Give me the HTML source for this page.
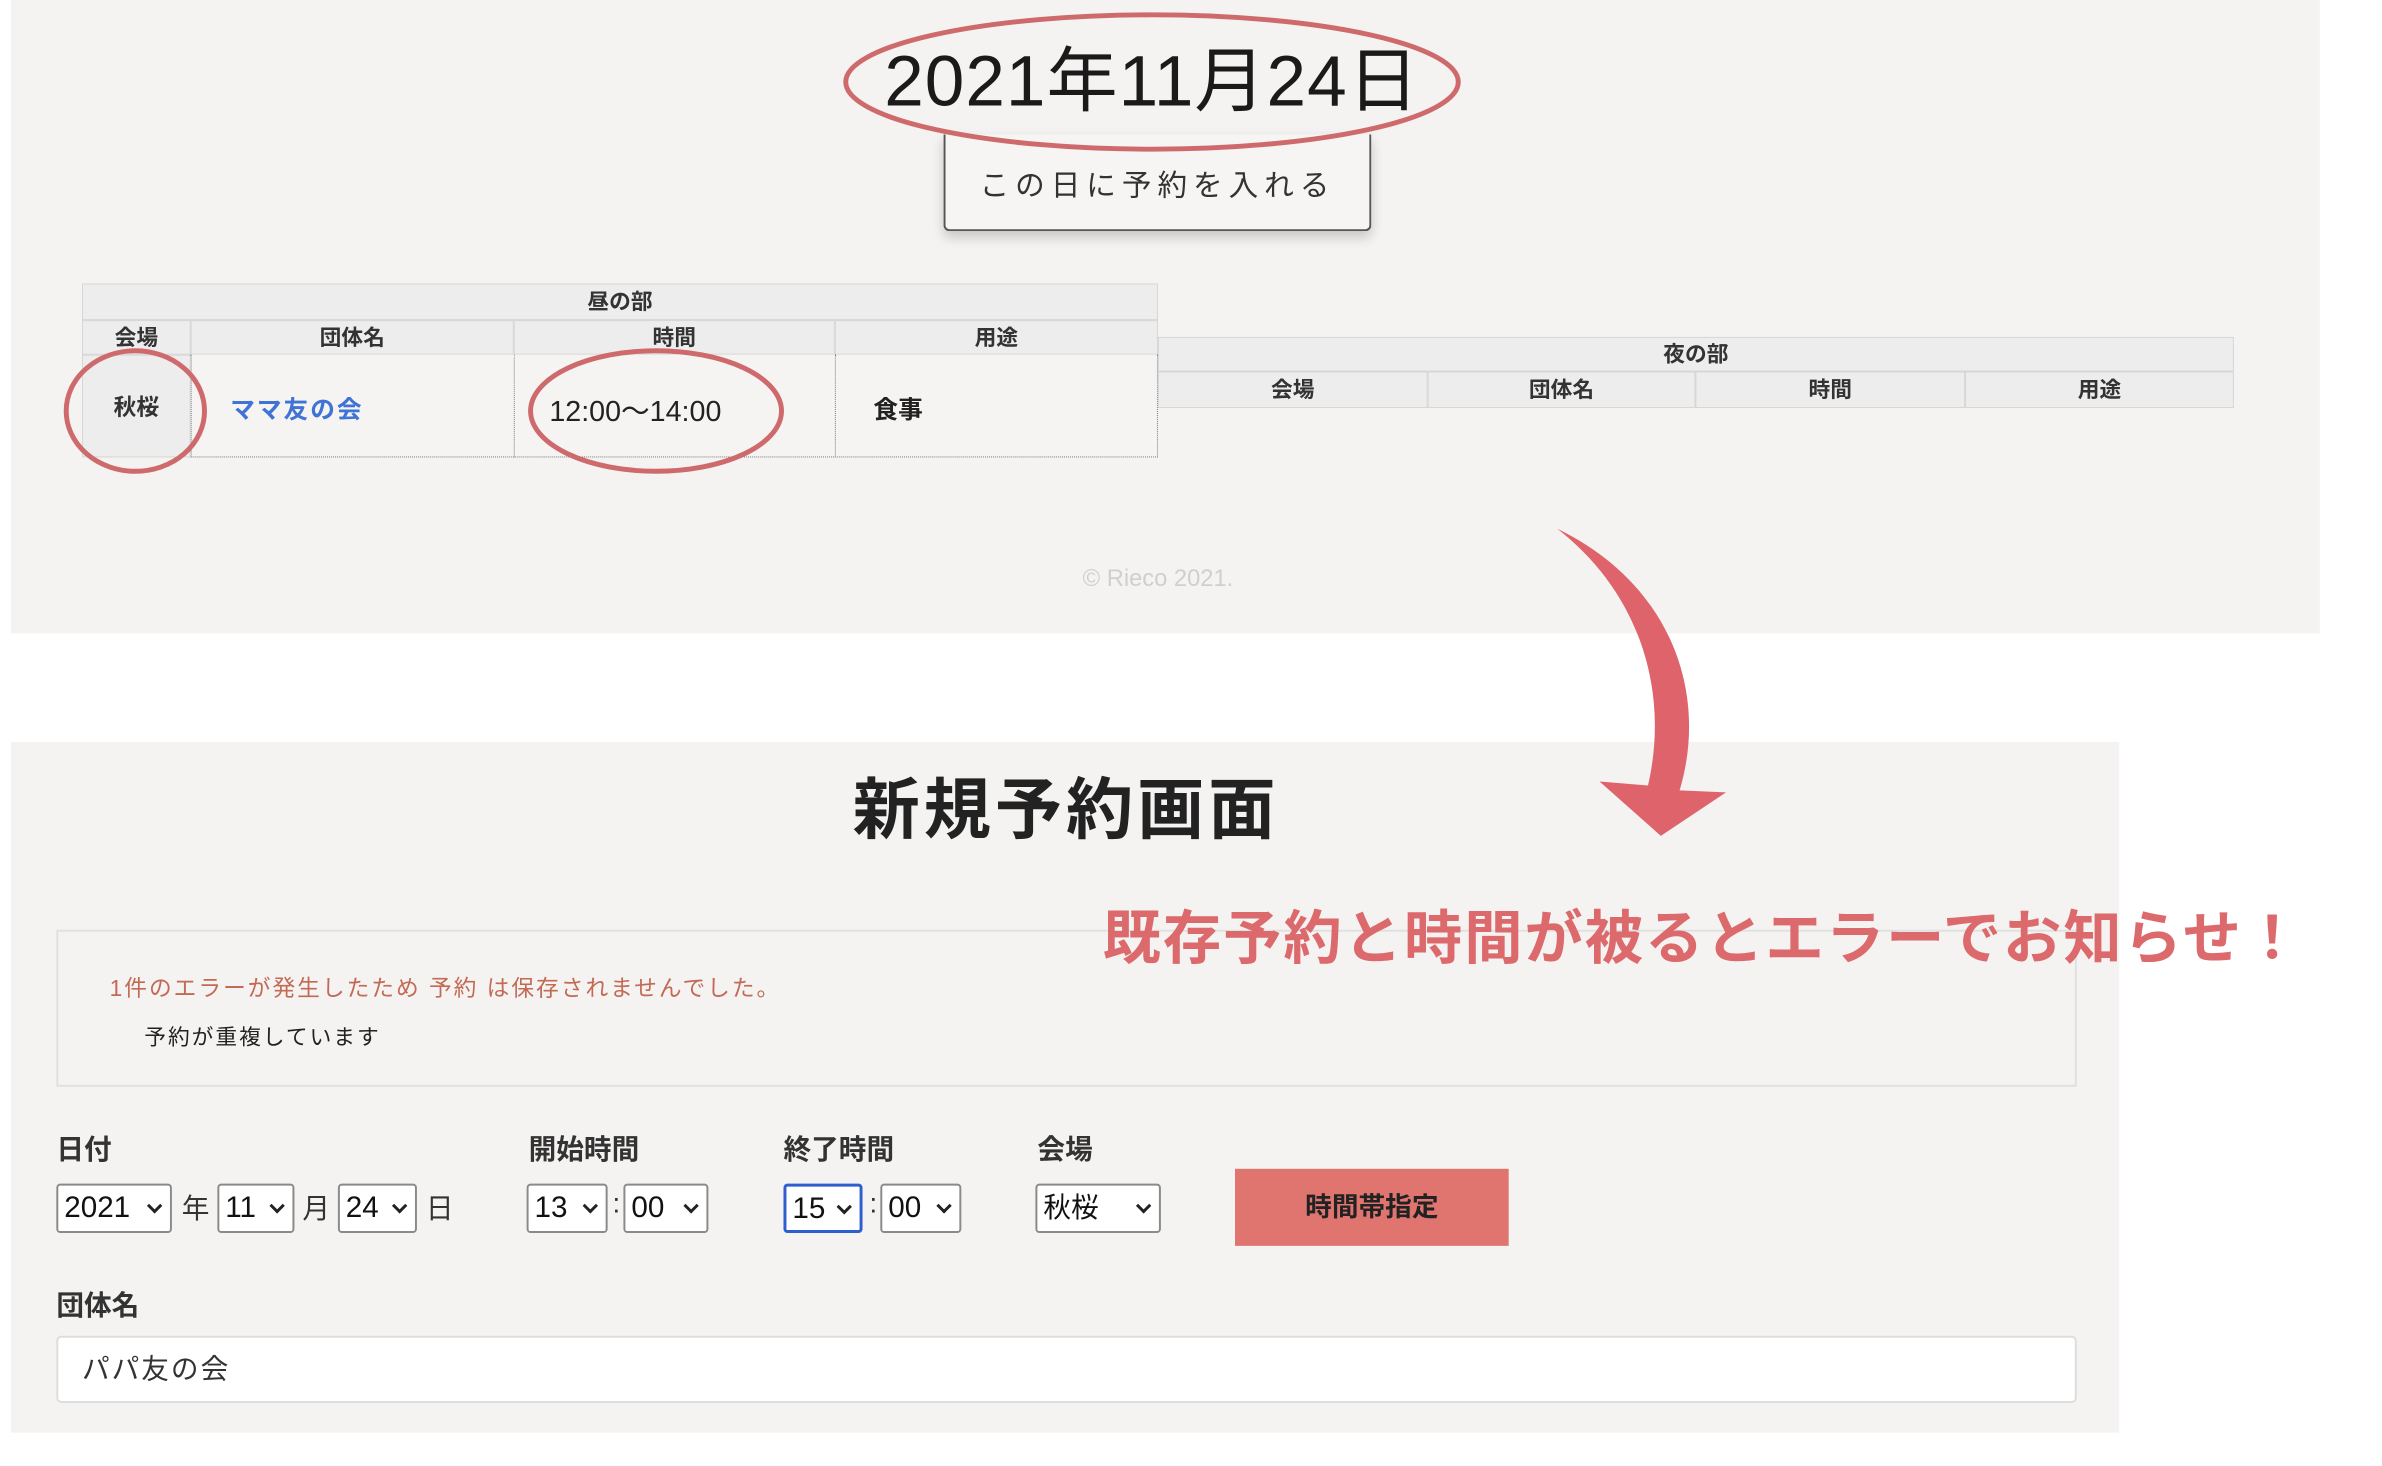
<!DOCTYPE html>
<html><head><meta charset="utf-8"><style>
body{margin:0;width:2382px;height:1466px;background:#fff;position:relative;overflow:hidden;font-family:"Liberation Sans","Noto Sans CJK JP",sans-serif;color:#222}
#w{position:absolute;left:0;top:0;width:2382px;height:1466px;transform:scale(0.988);transform-origin:0 0}
.a{position:absolute}
.panel{background:#f4f3f1}
.c{text-align:center}
.th{position:absolute;background:#ededed;border:1px solid #d6d6d6;box-sizing:border-box;font-size:22px;font-weight:bold;text-align:center;color:#333}
.sel{position:absolute;top:1198px;height:50px;background:#fff;border:2px solid #8a8a8a;border-radius:4px;box-sizing:border-box;font-size:30px;line-height:46px;padding-left:6px;color:#111}
.sel::after{content:"";position:absolute;right:10px;top:15px;width:8px;height:8px;border-right:3px solid #222;border-bottom:3px solid #222;transform:rotate(45deg)}
.lbl{position:absolute;top:1142px;font-size:28px;font-weight:bold;color:#333}
.unit{position:absolute;top:1202px;font-size:28px;color:#333}
</style></head><body><div id="w">
<div class="a panel" style="left:11px;top:0;width:2337px;height:641px"></div>
<div class="a c" style="left:860px;top:40px;width:612px;font-size:72px;line-height:86px;color:#1a1a1a;letter-spacing:1px">2021年11月24日</div>
<div class="a" style="left:955px;top:136px;width:433px;height:98px;border:2px solid #555;border-top:none;border-radius:0 0 6px 6px;box-sizing:border-box;box-shadow:0 6px 12px rgba(0,0,0,.18);background:#f6f5f3"></div>
<div class="a c" style="left:955px;top:163px;width:433px;font-size:30px;letter-spacing:6px;color:#333">この日に予約を入れる</div>

<div class="th" style="left:83px;top:287px;width:1089px;height:37px;line-height:35px">昼の部</div>
<div class="th" style="left:83px;top:324px;width:110px;height:35px;line-height:33px">会場</div>
<div class="th" style="left:193px;top:324px;width:327px;height:35px;line-height:33px">団体名</div>
<div class="th" style="left:520px;top:324px;width:325px;height:35px;line-height:33px">時間</div>
<div class="th" style="left:845px;top:324px;width:327px;height:35px;line-height:33px">用途</div>
<div class="th" style="left:83px;top:359px;width:110px;height:104px;line-height:104px;font-size:23px">秋桜</div>
<div class="a" style="left:193px;top:359px;width:979px;height:104px;border:1px dotted #777;border-top:none;box-sizing:border-box;background:#f5f4f2"></div>
<div class="a" style="left:520px;top:359px;height:104px;border-left:1px dotted #777"></div>
<div class="a" style="left:845px;top:359px;height:104px;border-left:1px dotted #777"></div>
<div class="a" style="left:233px;top:395px;font-size:25px;font-weight:bold;color:#3f74d6;letter-spacing:2px">ママ友の会</div>
<div class="a" style="left:556px;top:393px;font-size:29px;color:#222">12:00〜14:00</div>
<div class="a" style="left:884px;top:395px;font-size:25px;font-weight:bold;color:#222">食事</div>

<div class="th" style="left:1172px;top:341px;width:1089px;height:35px;line-height:33px">夜の部</div>
<div class="th" style="left:1172px;top:376px;width:273px;height:37px;line-height:35px">会場</div>
<div class="th" style="left:1445px;top:376px;width:271px;height:37px;line-height:35px">団体名</div>
<div class="th" style="left:1716px;top:376px;width:273px;height:37px;line-height:35px">時間</div>
<div class="th" style="left:1989px;top:376px;width:272px;height:37px;line-height:35px">用途</div>

<div class="a c" style="left:972px;top:572px;width:400px;font-size:24px;color:#cfcfcf">© Rieco 2021.</div>

<div class="a panel" style="left:11px;top:751px;width:2134px;height:699px"></div>
<div class="a c" style="left:779px;top:764px;width:600px;font-size:68px;font-weight:bold;color:#222;letter-spacing:4px">新規予約画面</div>
<div class="a" style="left:57px;top:941px;width:2045px;height:159px;border:2px solid #e0e0e0;box-sizing:border-box"></div>
<div class="a" style="left:1116px;top:902px;font-size:59px;font-weight:bold;color:#dc6a6c;white-space:nowrap;letter-spacing:2px">既存予約と時間が被るとエラーでお知らせ！</div>
<div class="a" style="left:111px;top:981px;font-size:23px;color:#c36a55;letter-spacing:2px">1件のエラーが発生したため 予約 は保存されませんでした。</div>
<div class="a" style="left:146px;top:1032px;font-size:22px;color:#222;letter-spacing:2px">予約が重複しています</div>

<div class="lbl" style="left:57px">日付</div>
<div class="lbl" style="left:535px">開始時間</div>
<div class="lbl" style="left:793px">終了時間</div>
<div class="lbl" style="left:1050px">会場</div>
<div class="sel" style="left:57px;width:117px">2021</div>
<div class="unit" style="left:184px">年</div>
<div class="sel" style="left:220px;width:78px">11</div>
<div class="unit" style="left:306px">月</div>
<div class="sel" style="left:342px;width:80px">24</div>
<div class="unit" style="left:431px">日</div>
<div class="sel" style="left:533px;width:82px">13</div>
<div class="unit" style="left:620px">:</div>
<div class="sel" style="left:631px;width:86px">00</div>
<div class="sel" style="left:793px;width:80px;border-color:#2f5fcf;border-width:3px">15</div>
<div class="unit" style="left:880px">:</div>
<div class="sel" style="left:891px;width:82px">00</div>
<div class="sel" style="left:1048px;width:127px;font-size:28px">秋桜</div>
<div class="a c" style="left:1250px;top:1183px;width:277px;height:78px;line-height:78px;background:#e07570;font-size:27px;font-weight:bold;color:#222">時間帯指定</div>

<div class="lbl" style="left:57px;top:1300px">団体名</div>
<div class="a" style="left:57px;top:1352px;width:2045px;height:68px;background:#fff;border:2px solid #ddd;border-radius:5px;box-sizing:border-box;font-size:28px;line-height:64px;padding-left:24px;color:#333;letter-spacing:2px">パパ友の会</div>

<svg class="a" style="left:0;top:0" width="2382" height="1466">
<g fill="none" stroke="#cf6a6c" stroke-width="5">
<ellipse cx="1166" cy="83" rx="310" ry="68"/>
<ellipse cx="137" cy="416" rx="70" ry="61"/>
<ellipse cx="664" cy="416" rx="127" ry="61"/>
</g>
<path d="M1576,535 C1690,590 1730,700 1700,800 L1747,802 L1681,846 L1619,791 L1668,795 C1690,700 1660,600 1576,535 Z" fill="#de636a"/>
</svg>
</div></body></html>
